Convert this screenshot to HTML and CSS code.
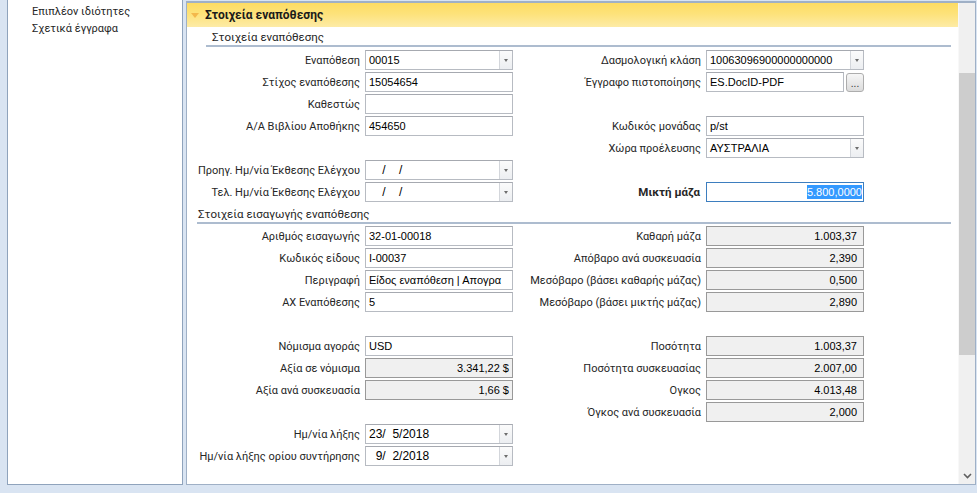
FILE: index.html
```html
<!DOCTYPE html>
<html lang="el">
<head>
<meta charset="utf-8">
<title>Στοιχεία εναπόθεσης</title>
<link rel="stylesheet" href="styles.css">
</head>
<body>
<div class="app">
  <aside class="nav">
    <div class="nav-item">Επιπλέον ιδιότητες</div>
    <div class="nav-item">Σχετικά έγγραφα</div>
  </aside>
  <section class="panel">
    <div class="content">
      <div class="header"><span class="caret"></span>Στοιχεία εναπόθεσης</div>
      <div class="group-title g1">Στοιχεία εναπόθεσης</div>
      <div class="form f1">
        <label class="lbl">Εναπόθεση</label>
        <div class="field combo"><span class="val">00015</span><span class="drop"></span></div>
        <label class="lbl">Δασμολογική κλάση</label>
        <div class="field combo"><span class="val">10063096900000000000</span><span class="drop"></span></div>

        <label class="lbl">Στίχος εναπόθεσης</label>
        <div class="field"><span class="val">15054654</span></div>
        <label class="lbl">Έγγραφο πιστοποίησης</label>
        <div class="pair"><div class="field"><span class="val">ES.DocID-PDF</span></div><span class="btn">...</span></div>

        <label class="lbl">Καθεστώς</label>
        <div class="field"></div>
        <span class="sp"></span>
        <span class="sp"></span>

        <label class="lbl">Α/Α Βιβλίου Αποθήκης</label>
        <div class="field"><span class="val">454650</span></div>
        <label class="lbl">Κωδικός μονάδας</label>
        <div class="field"><span class="val">p/st</span></div>

        <span class="sp"></span>
        <span class="sp"></span>
        <label class="lbl">Χώρα προέλευσης</label>
        <div class="field combo"><span class="val">ΑΥΣΤΡΑΛΙΑ</span><span class="drop"></span></div>

        <label class="lbl">Προηγ. Ημ/νία Έκθεσης Ελέγχου</label>
        <div class="field combo date"><span class="val"><i>00</i>/<i>00</i>/</span><span class="drop"></span></div>
        <span class="sp"></span>
        <span class="sp"></span>

        <label class="lbl">Τελ. Ημ/νία Έκθεσης Ελέγχου</label>
        <div class="field combo date"><span class="val"><i>00</i>/<i>00</i>/</span><span class="drop"></span></div>
        <label class="lbl bold">Μικτή μάζα</label>
        <div class="field focus"><span class="sel">5.800,0000</span></div>
      </div>

      <div class="group-title g2">Στοιχεία εισαγωγής εναπόθεσης</div>
      <div class="form f2">
        <label class="lbl">Αριθμός εισαγωγής</label>
        <div class="field"><span class="val">32-01-00018</span></div>
        <label class="lbl">Καθαρή μάζα</label>
        <div class="field ro">1.003,37</div>

        <label class="lbl">Κωδικός είδους</label>
        <div class="field"><span class="val">I-00037</span></div>
        <label class="lbl">Απόβαρο ανά συσκευασία</label>
        <div class="field ro">2,390</div>

        <label class="lbl">Περιγραφή</label>
        <div class="field"><span class="val">Είδος εναπόθεση | Απογρα</span></div>
        <label class="lbl">Μεσόβαρο (βάσει καθαρής μάζας)</label>
        <div class="field ro">0,500</div>

        <label class="lbl">ΑΧ Εναπόθεσης</label>
        <div class="field"><span class="val">5</span></div>
        <label class="lbl">Μεσόβαρο (βάσει μικτής μάζας)</label>
        <div class="field ro">2,890</div>

        <span class="sp"></span>
        <span class="sp"></span>
        <span class="sp"></span>
        <span class="sp"></span>

        <label class="lbl">Νόμισμα αγοράς</label>
        <div class="field"><span class="val">USD</span></div>
        <label class="lbl">Ποσότητα</label>
        <div class="field ro">1.003,37</div>

        <label class="lbl">Αξία σε νόμισμα</label>
        <div class="field ro tight">3.341,22 $</div>
        <label class="lbl">Ποσότητα συσκευασίας</label>
        <div class="field ro">2.007,00</div>

        <label class="lbl">Αξία ανά συσκευασία</label>
        <div class="field ro tight">1,66 $</div>
        <label class="lbl">Ογκος</label>
        <div class="field ro">4.013,48</div>

        <span class="sp"></span>
        <span class="sp"></span>
        <label class="lbl">Όγκος ανά συσκευασία</label>
        <div class="field ro">2,000</div>

        <label class="lbl">Ημ/νία λήξης</label>
        <div class="field combo date"><span class="val">23/<i>0</i>5/2018</span><span class="drop"></span></div>
        <span class="sp"></span>
        <span class="sp"></span>

        <label class="lbl">Ημ/νία λήξης ορίου συντήρησης</label>
        <div class="field combo date"><span class="val"><i>0</i>9/<i>0</i>2/2018</span><span class="drop"></span></div>
        <span class="sp"></span>
        <span class="sp"></span>
      </div>
    </div>
    <div class="scrollbar">
      <div class="thumb"></div>
      <div class="arrow">
        <svg width="9" height="6" viewBox="0 0 9 6"><polyline points="1,1 4.5,4.5 8,1" fill="none" stroke="#5f5f5f" stroke-width="1.6"/></svg>
      </div>
    </div>
  </section>
</div>
</body>
</html>
```

FILE: styles.css
```css
* { box-sizing: border-box; }

html, body {
  margin: 0;
  padding: 0;
}

body {
  width: 977px;
  height: 493px;
  overflow: hidden;
  background: #d9e4f2;
  font-family: Roboto, "Noto Sans", sans-serif;
  font-size: 11px;
  color: #262626;
}

.app {
  display: flex;
  height: 485px;
  padding-left: 7px;
  gap: 3px;
}

.nav {
  width: 176px;
  flex: none;
  background: #fff;
  border: 1px solid #8fa3bc;
  border-top: none;
  padding: 3px 0 0 24px;
}

.nav-item {
  height: 17px;
  line-height: 17px;
  font-size: 11px;
  white-space: nowrap;
}

.panel {
  flex: 1;
  margin-top: 1px;
  margin-right: 1px;
  border: 1px solid #9fb0c6;
  border-top-width: 2px;
  background: #fff;
  display: flex;
}

.content {
  flex: 1;
  overflow: hidden;
}

.header {
  height: 24px;
  display: flex;
  align-items: center;
  padding-left: 4px;
  background: linear-gradient(#fddc63, #fde27a 45%, #fdeba6);
  font-weight: bold;
  font-size: 12px;
  color: #1a1a1a;
}

.caret {
  width: 0;
  height: 0;
  border-left: 4px solid transparent;
  border-right: 4px solid transparent;
  border-top: 5px solid #f3b84c;
  margin-right: 6px;
}

.group-title {
  display: flex;
  align-items: center;
  border-bottom: 2px solid #adbccf;
  white-space: nowrap;
  font-size: 11.5px;
}

.g1 {
  height: 20px;
  margin: 0 7px 0 19px;
  padding: 1px 0 0 6px;
}

.g2 {
  height: 22px;
  margin: 0 7px 0 10px;
  padding: 3px 0 0 1px;
}

.form {
  display: grid;
  grid-template-columns: 173px 148px 183px 158px;
  column-gap: 5px;
  row-gap: 2px;
  grid-auto-rows: 20px;
}

.f1 { margin-top: 3px; }
.f2 { margin-top: 2px; }

.lbl {
  display: flex;
  align-items: center;
  justify-content: flex-end;
  white-space: nowrap;
}

.lbl.bold {
  font-weight: bold;
  font-size: 11.5px;
  padding-right: 1px;
}

.field {
  display: flex;
  align-items: center;
  border: 1px solid #b7bbc2;
  border-top-color: #a6a9b0;
  background: #fff;
  padding: 0 3px;
  font-family: "Liberation Sans", Arial, sans-serif;
  font-size: 11px;
  color: #000;
  white-space: pre;
  overflow: hidden;
}

.field .val {
  flex: 1;
}

.field.ro {
  background: #f0f0f0;
  border-color: #999;
  justify-content: flex-end;
  padding-right: 6px;
}

.field.ro.tight {
  padding-right: 3px;
}

.field.combo {
  padding-right: 0;
}

.drop {
  align-self: stretch;
  width: 13px;
  margin: 0;
  border-left: 1px solid #d3d6db;
  background: linear-gradient(#fbfbfb, #eceef1);
  display: flex;
  align-items: center;
  justify-content: center;
}

.drop::after {
  content: "";
  width: 0;
  height: 0;
  border-left: 2.5px solid transparent;
  border-right: 2.5px solid transparent;
  border-top: 3px solid #6d6d6d;
}

.field.date {
  font-size: 12px;
}

.field.date i {
  font-style: normal;
  color: transparent;
}

.field.focus {
  border-color: #3d7ebf;
  justify-content: flex-end;
  padding-right: 1px;
}

.sel {
  background: #3399ff;
  color: #fff;
  line-height: 14px;
}

.pair {
  display: flex;
  align-items: center;
  gap: 2px;
}

.pair .field {
  width: 138px;
  height: 20px;
}

.btn {
  width: 18px;
  height: 19px;
  border: 1px solid #adadad;
  border-radius: 3px;
  background: linear-gradient(#f6f6f6, #e9e9e9 50%, #dcdcdc);
  display: flex;
  justify-content: center;
  align-items: flex-end;
  padding-bottom: 3px;
  font-family: "Liberation Sans", Arial, sans-serif;
  font-size: 10px;
  line-height: 8px;
  color: #333;
}

.scrollbar {
  width: 17px;
  flex: none;
  background: #f0f0f0;
  border-left: 1px solid #f8f8f8;
  display: flex;
  flex-direction: column;
}

.thumb {
  margin-top: 70px;
  height: 282px;
  background: #cdcdcd;
}

.arrow {
  margin-top: auto;
  height: 17px;
  display: flex;
  align-items: center;
  justify-content: center;
}
```
